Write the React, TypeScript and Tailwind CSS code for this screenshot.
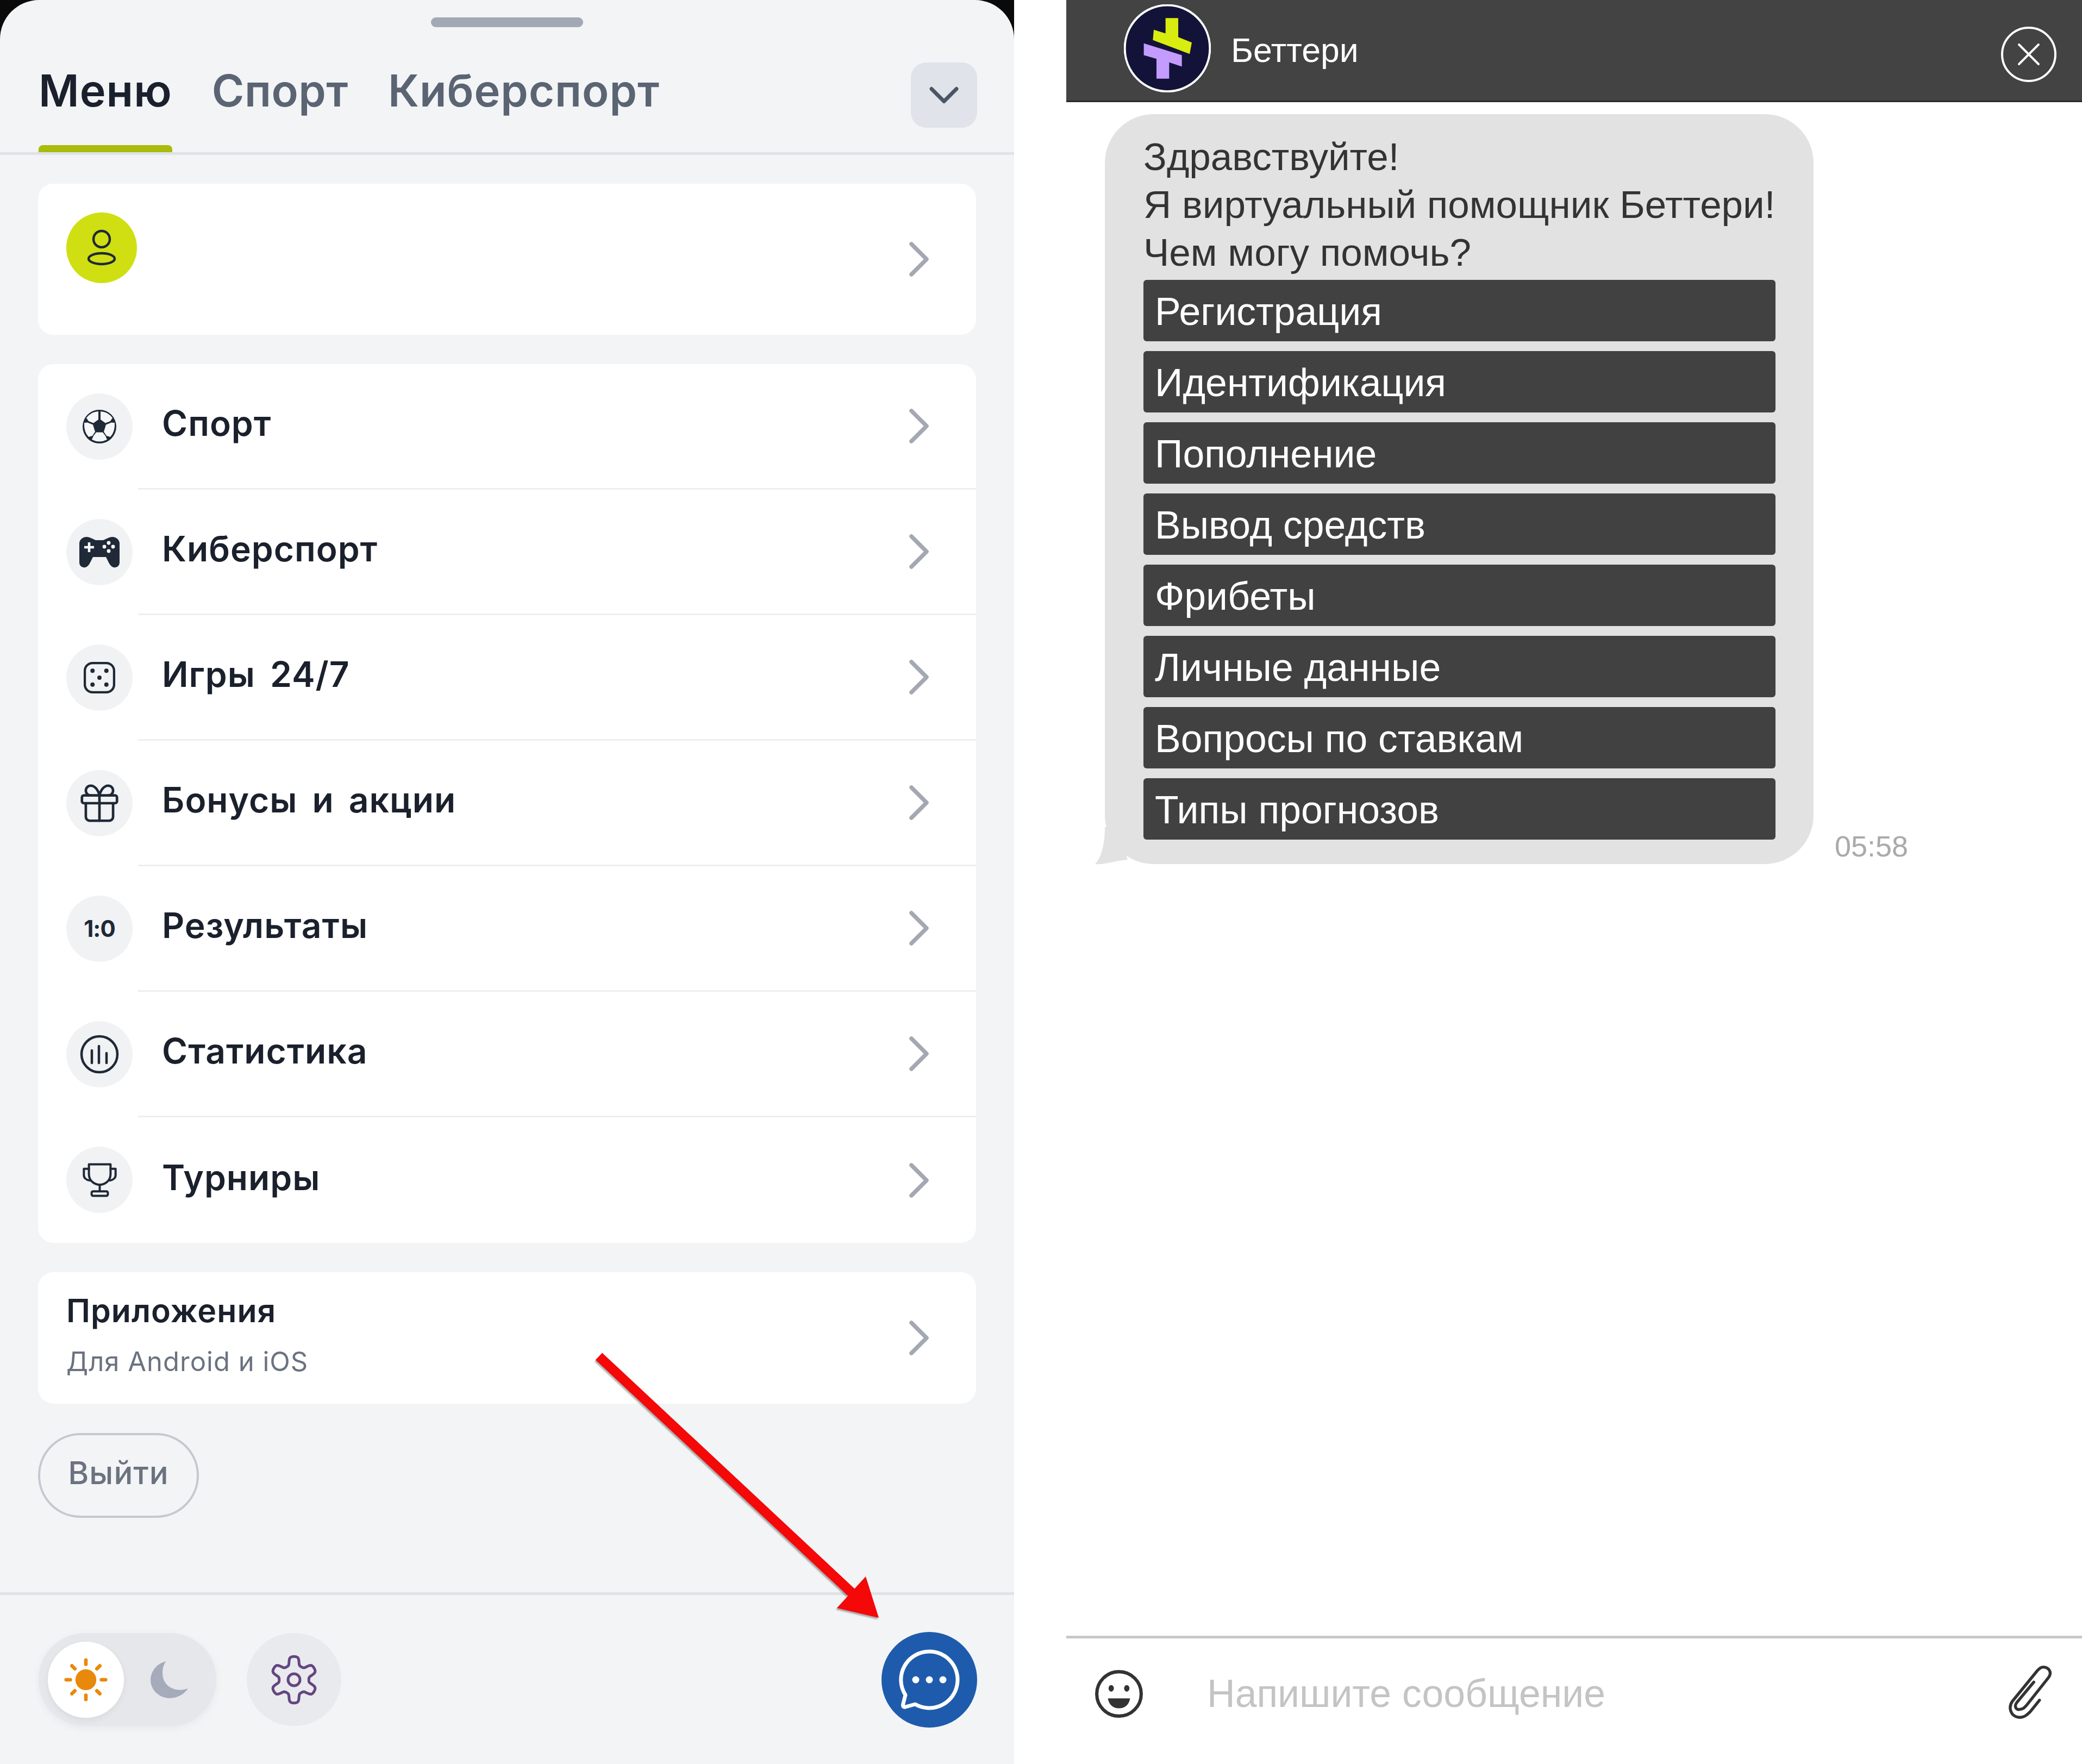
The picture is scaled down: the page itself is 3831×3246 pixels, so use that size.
import React from "react";
import { ChevronDown, ChevronRight, Gift, X } from "lucide-react";

const S = { fontFamily: "Inter, 'Noto Sans', sans-serif" };
const INK = "#1f2937";

function Chevron() {
  return <ChevronRight className="w-[112px] h-[112px] text-[#a3a8b2] shrink-0" strokeWidth={1.6} />;
}

function Ball() {
  return (
    <svg viewBox="-32 -32 64 64" className="w-[64px] h-[64px]">
      <circle r="31" fill={INK} />
      <g fill="#f6f7f8">
        <path d="M-2,-28 L-2,-13 L-11,-6.5 L-20,-10 L-24,-16 Q-16,-27 -2,-28 Z" />
        <path d="M2,-28 L2,-13 L11,-6.5 L20,-10 L24,-16 Q16,-27 2,-28 Z" />
        <path d="M-28,-7 L-22,-7.5 L-12,-3.5 L-8,9.5 L-13,17 L-20,19 Q-29,9 -28,-7 Z" />
        <path d="M28,-7 L22,-7.5 L12,-3.5 L8,9.5 L13,17 L20,19 Q29,9 28,-7 Z" />
        <path d="M-6,10.5 L6,10.5 L11,17 L14,24 Q0,31 -14,24 L-11,17 Z" />
      </g>
    </svg>
  );
}

function Gamepad() {
  return (
    <svg viewBox="0 0 76 58" className="w-[76px] h-[58px]">
      <path
        d="M14 1 C8 1 2 5 1 12 L1 48 C1 55 7 58 12 57 C16 56 19 52 21 48 L26 38 L50 38 L55 48 C57 52 60 56 64 57 C69 58 75 55 75 48 L75 12 C74 5 68 1 62 1 C54 1 48 7 44 7 L32 7 C28 7 22 1 14 1 Z"
        fill={INK}
      />
      <path d="M19 11 V29 M10 20 H28" stroke="#fff" strokeWidth="4.5" />
      <g fill="#fff">
        <circle cx="55" cy="12" r="3.4" />
        <circle cx="47" cy="19" r="3.4" />
        <circle cx="63" cy="19" r="3.4" />
        <circle cx="55" cy="27" r="3.4" />
      </g>
    </svg>
  );
}

function Dice() {
  return (
    <svg viewBox="0 0 24 24" className="w-[68px] h-[68px]" fill="none" stroke={INK} strokeWidth="1.5">
      <rect x="2.5" y="2.5" width="19" height="19" rx="5" />
      <g fill={INK} stroke="none">
        <circle cx="7.5" cy="7.5" r="1.4" />
        <circle cx="16.5" cy="7.5" r="1.4" />
        <circle cx="12" cy="12" r="1.4" />
        <circle cx="7.5" cy="16.5" r="1.4" />
        <circle cx="16.5" cy="16.5" r="1.4" />
      </g>
    </svg>
  );
}

function Stats() {
  return (
    <svg viewBox="0 0 72 72" className="w-[72px] h-[72px]" fill="none" stroke={INK} strokeWidth="4.5" strokeLinecap="round">
      <circle cx="36" cy="36" r="33" />
      <path d="M22 29V52 M35 21V52 M49 34V52" />
    </svg>
  );
}

function Cup() {
  return (
    <svg viewBox="122 812 196 198" className="w-[65px] h-[66px]" fill="none" stroke={INK} strokeWidth="12" strokeLinejoin="round" strokeLinecap="round">
      <path d="M160 825 H280 V880 C280 915 250 938 220 938 C190 938 160 915 160 880 Z" />
      <path d="M160 850 H132 V885 C132 900 145 912 165 915" />
      <path d="M280 850 H308 V885 C308 900 295 912 275 915" />
      <path d="M220 938 V975" />
      <rect x="175" y="975" width="90" height="25" rx="8" />
    </svg>
  );
}

const rows: [string, React.ReactNode][] = [
  ["Спорт", <Ball />],
  ["Киберспорт", <Gamepad />],
  ["Игры 24/7", <Dice />],
  ["Бонусы и акции", <Gift className="w-[86px] h-[86px] text-[#1f2937]" strokeWidth={1.3} />],
  ["Результаты", <span className="text-[42px] font-bold tracking-[-1px] text-[#1f2937]">1:0</span>],
  ["Статистика", <Stats />],
  ["Турниры", <Cup />],
];

const options = ["Регистрация", "Идентификация", "Пополнение", "Вывод средств", "Фрибеты", "Личные данные", "Вопросы по ставкам", "Типы прогнозов"];

function Sun() {
  const rays = [0, 45, 90, 135, 180, 225, 270, 315];
  return (
    <svg viewBox="0 0 80 80" className="w-[88px] h-[88px]">
      <circle cx="40" cy="40" r="17.5" fill="#e8890c" />
      {rays.map((r) => (
        <line key={r} x1="40" y1="7" x2="40" y2="14" stroke="#e8890c" strokeWidth="6" strokeLinecap="round" transform={`rotate(${r} 40 40)`} />
      ))}
    </svg>
  );
}

function Moon() {
  return (
    <svg viewBox="655 185 207 205" className="w-[69px] h-[68px]">
      <path d="M740 185 C680 200 655 250 655 290 C655 350 710 390 760 390 C805 390 845 365 862 335 C800 360 730 330 722 265 C718 235 725 205 740 185 Z" fill="#a5abba" />
    </svg>
  );
}

function Gear() {
  const pts: string[] = [];
  for (let i = 0; i < 240; i++) {
    const t = (i / 240) * Math.PI * 2;
    const r = 35 + 8 * Math.tanh(2 * Math.cos(6 * t));
    pts.push(`${(48 + r * Math.sin(t)).toFixed(2)},${(48 - r * Math.cos(t)).toFixed(2)}`);
  }
  return (
    <svg viewBox="0 0 96 96" className="w-[96px] h-[96px]" fill="none" stroke="#63467f" strokeWidth="5" strokeLinejoin="round">
      <polygon points={pts.join(" ")} />
      <circle cx="48" cy="48" r="11" />
    </svg>
  );
}

function Chat() {
  return (
    <svg viewBox="0 0 116 116" className="w-[116px] h-[116px]">
      <path
        d="M58 6 A52 52 0 1 1 32 103 L14 108 Q8 109 10 102 L14 86 A52 52 0 0 1 58 6 Z"
        fill="none"
        stroke="#fff"
        strokeWidth="7"
        strokeLinejoin="round"
      />
      <g fill="#fff">
        <circle cx="33" cy="58" r="6.5" />
        <circle cx="58" cy="58" r="6.5" />
        <circle cx="83" cy="58" r="6.5" />
      </g>
    </svg>
  );
}

function Smiley() {
  return (
    <svg viewBox="0 0 44 44" className="w-[90px] h-[90px]" fill="none" stroke="#333" strokeWidth="3">
      <circle cx="22" cy="22" r="20" />
      <ellipse cx="15" cy="17" rx="2.4" ry="3" fill="#333" stroke="none" />
      <ellipse cx="29" cy="17" rx="2.4" ry="3" fill="#333" stroke="none" />
      <path d="M12 26 H32 C31 32 27 35 22 35 C17 35 13 32 12 26 Z" fill="#333" stroke="none" />
    </svg>
  );
}

function Clip() {
  return (
    <svg viewBox="0 0 48 48" className="w-[100px] h-[100px]" fill="none" stroke="#333" strokeWidth="2.6" strokeLinecap="round" strokeLinejoin="round">
      <path d="M28 15 L13 33 C10 37 13 40 16 39 C19 39 20 37 22 35 L41 11 C44 7 42 3 38 2 C35 1 33 3 31 5 L9 32 C5 38 8 45 14 46 C19 47 22 44 25 41 L33 31" />
    </svg>
  );
}

export default function App() {
  return (
    <div className="relative flex w-[3831px] h-[3246px] bg-white overflow-hidden">
      <div className="w-[1866px] h-full bg-[#0a0a0a] shrink-0">
        <div className="flex flex-col h-full bg-[#f3f4f6] rounded-t-[72px]" style={S}>
          <div className="flex justify-center pt-[32px]">
            <div className="w-[280px] h-[18px] rounded-full bg-[#a3a8b5]" />
          </div>
          <div className="flex items-start justify-between h-[235px] border-b-[5px] border-[#e0e2e6] pl-[71px] pr-[68px]">
            <div className="flex gap-[73px] pt-[62px]">
              <div className="relative h-[168px] text-[81px] leading-[110px] font-semibold text-[#1a202c] tracking-[1px]">
                Меню
                <div className="absolute left-0 right-0 bottom-0 h-[13px] rounded-t-[8px] bg-[#a9bb0b]" />
              </div>
              <div className="text-[81px] leading-[110px] font-semibold text-[#5a6473] tracking-[0.5px]">Спорт</div>
              <div className="text-[81px] leading-[110px] font-semibold text-[#5a6473] tracking-[1px]">Киберспорт</div>
            </div>
            <div className="mt-[65px] w-[122px] h-[120px] rounded-[28px] bg-[#e0e3ea] flex items-center justify-center">
              <ChevronDown className="w-[92px] h-[92px] text-[#4b5563]" strokeWidth={1.8} />
            </div>
          </div>

          <div className="flex flex-col gap-[54px] px-[70px] pt-[53px]">
            <div className="h-[278px] rounded-[28px] bg-white flex justify-between pl-[52px] pr-[49px]">
              <div className="mt-[53px] w-[130px] h-[130px] rounded-full bg-[#cfdf12] flex items-center justify-center">
                <svg viewBox="0 0 40 40" className="w-[80px] h-[80px]" fill="none" stroke="#1f2937" strokeWidth="2.2">
                  <circle cx="20" cy="12" r="7.5" />
                  <ellipse cx="20" cy="30" rx="12" ry="5" />
                </svg>
              </div>
              <div className="self-center"><Chevron /></div>
            </div>

            <div className="rounded-[28px] bg-white flex flex-col">
              {rows.map(([label, icon], i) => (
                <div key={label} className="flex items-center h-[231px] pl-[52px]">
                  <div className="w-[122px] h-[122px] mb-[2px] rounded-full bg-[#f1f2f4] flex items-center justify-center shrink-0">{icon}</div>
                  <div className={`flex items-center justify-between flex-1 h-full ml-[10px] pr-[49px] ${i < rows.length - 1 ? "border-b-[3px] border-[#eceef0]" : ""}`}>
                    <span className="ml-[44px] mb-[10px] text-[64px] [word-spacing:10px] font-semibold text-[#1a202c] tracking-[1px]">{label}</span>
                    <div><Chevron /></div>
                  </div>
                </div>
              ))}
            </div>

            <div className="h-[242px] rounded-[28px] bg-white flex items-center justify-between pl-[52px] pr-[49px]">
              <div className="pb-[11px]">
                <div className="text-[59px] leading-[80px] font-semibold text-[#1a202c] tracking-[1px]">Приложения</div>
                <div className="mt-[19px] text-[49px] leading-[70px] text-[#6b7280] tracking-[1px]">Для Android и iOS</div>
              </div>
              <Chevron />
            </div>

            <div className="flex items-center justify-center w-[296px] h-[156px] pb-[10px] rounded-full border-[4px] border-[#c5c8cf] text-[58px] font-medium text-[#6b7280] tracking-[1px]">
              Выйти
            </div>
          </div>

          <div className="mt-auto h-[316px] border-t-[5px] border-[#e0e2e6] flex items-start justify-between pl-[71px] pr-[68px] pt-[70px]">
            <div className="flex items-center gap-[56px]">
              <div className="w-[327px] h-[171px] rounded-full bg-[#e5e7eb] flex items-center pl-[17px] shadow-[0_4px_16px_rgba(0,0,0,0.05)]">
                <div className="w-[140px] h-[140px] rounded-full bg-white flex items-center justify-center shadow-[0_4px_12px_rgba(0,0,0,0.06)]"><Sun /></div>
                <div className="ml-[49px]"><Moon /></div>
              </div>
              <div className="w-[174px] h-[171px] rounded-full bg-[#e9eaee] flex items-center justify-center">
                <Gear />
              </div>
            </div>
            <div className="w-[176px] h-[176px] mt-[-2px] rounded-full bg-[#1e5bac] flex items-center justify-center">
              <Chat />
            </div>
          </div>
        </div>
      </div>

      <div className="flex flex-col flex-1 ml-[96px] h-full" style={{ fontFamily: "'Liberation Sans', Arial, sans-serif" }}>
        <div className="h-[188px] bg-[#434343] border-b-[3px] border-[#2b2b2b] flex items-start justify-between pl-[106px] pr-[47px] shrink-0">
          <div className="flex items-center mt-[8px]">
            <svg viewBox="85 25 480 485" className="w-[160px] h-[162px]">
              <ellipse cx="325" cy="267" rx="235" ry="238" fill="#13133a" stroke="#fff" strokeWidth="12" />
              <polygon points="315,100 385,100 385,205 460,235 448,298 245,222 250,165 315,185" fill="#d9ec0f" />
              <polygon points="195,240 405,305 405,368 335,345 335,435 265,435 265,325 195,305" fill="#c49cff" />
            </svg>
            <span className="ml-[37px] mt-[6px] text-[62.5px] leading-[70px] text-white">Беттери</span>
          </div>
          <div className="mt-[49px] w-[102px] h-[102px] rounded-full border-[4px] border-white flex items-center justify-center">
            <X className="w-[72px] h-[72px] text-white" strokeWidth={1.3} />
          </div>
        </div>

        <div className="flex flex-1 min-h-0 items-start pl-[71px] pt-[22px]">
          <div className="flex items-end">
            <div className="relative w-[1304px] h-[1380px] rounded-[90px] bg-[#e2e2e2] pl-[71px] pr-[70px] pt-[35px]">
              <svg viewBox="0 0 60 70" className="absolute left-[-18px] bottom-[-2px] w-[60px] h-[70px]">
                <path d="M18 0 C18 30 12 56 0 68 C16 70 34 62 60 60 L40 0 Z" fill="#e2e2e2" />
              </svg>
              <div className="text-[71px] leading-[88px] text-[#333333]">
                <div>Здравствуйте!</div>
                <div className="whitespace-nowrap">Я виртуальный помощник Беттери!</div>
                <div>Чем могу помочь?</div>
              </div>
              <div className="flex flex-col gap-[18px] mt-[6px]">
                {options.map((o) => (
                  <div key={o} className="h-[113px] rounded-[6px] bg-[#414141] pl-[21px] pt-[4px] flex items-center text-[71.5px] text-white">{o}</div>
                ))}
              </div>
            </div>
            <span className="ml-[39px] relative bottom-[3px] text-[54px] leading-[60px] text-[#aaaaaa]">05:58</span>
          </div>
        </div>

        <div className="h-[236px] border-t-[5px] border-[#c8c8c8] flex items-start pl-[52px] pr-[47px] pt-[57px] shrink-0">
          <Smiley />
          <span className="ml-[117px] mt-[-1px] text-[71.5px] leading-[90px] text-[#c4c4c4]">Напишите сообщение</span>
          <div className="ml-auto mt-[-8px]"><Clip /></div>
        </div>
      </div>

      <svg viewBox="0 0 3831 3246" className="absolute inset-0 w-[3831px] h-[3246px] pointer-events-none drop-shadow-[-2px_3px_1px_rgba(0,0,0,0.3)]">
        <line x1="1102" y1="2496" x2="1575" y2="2938" stroke="#f40808" strokeWidth="18" />
        <polygon points="1593,2901 1540,2959 1617,2977" fill="#f40808" />
      </svg>
    </div>
  );
}
